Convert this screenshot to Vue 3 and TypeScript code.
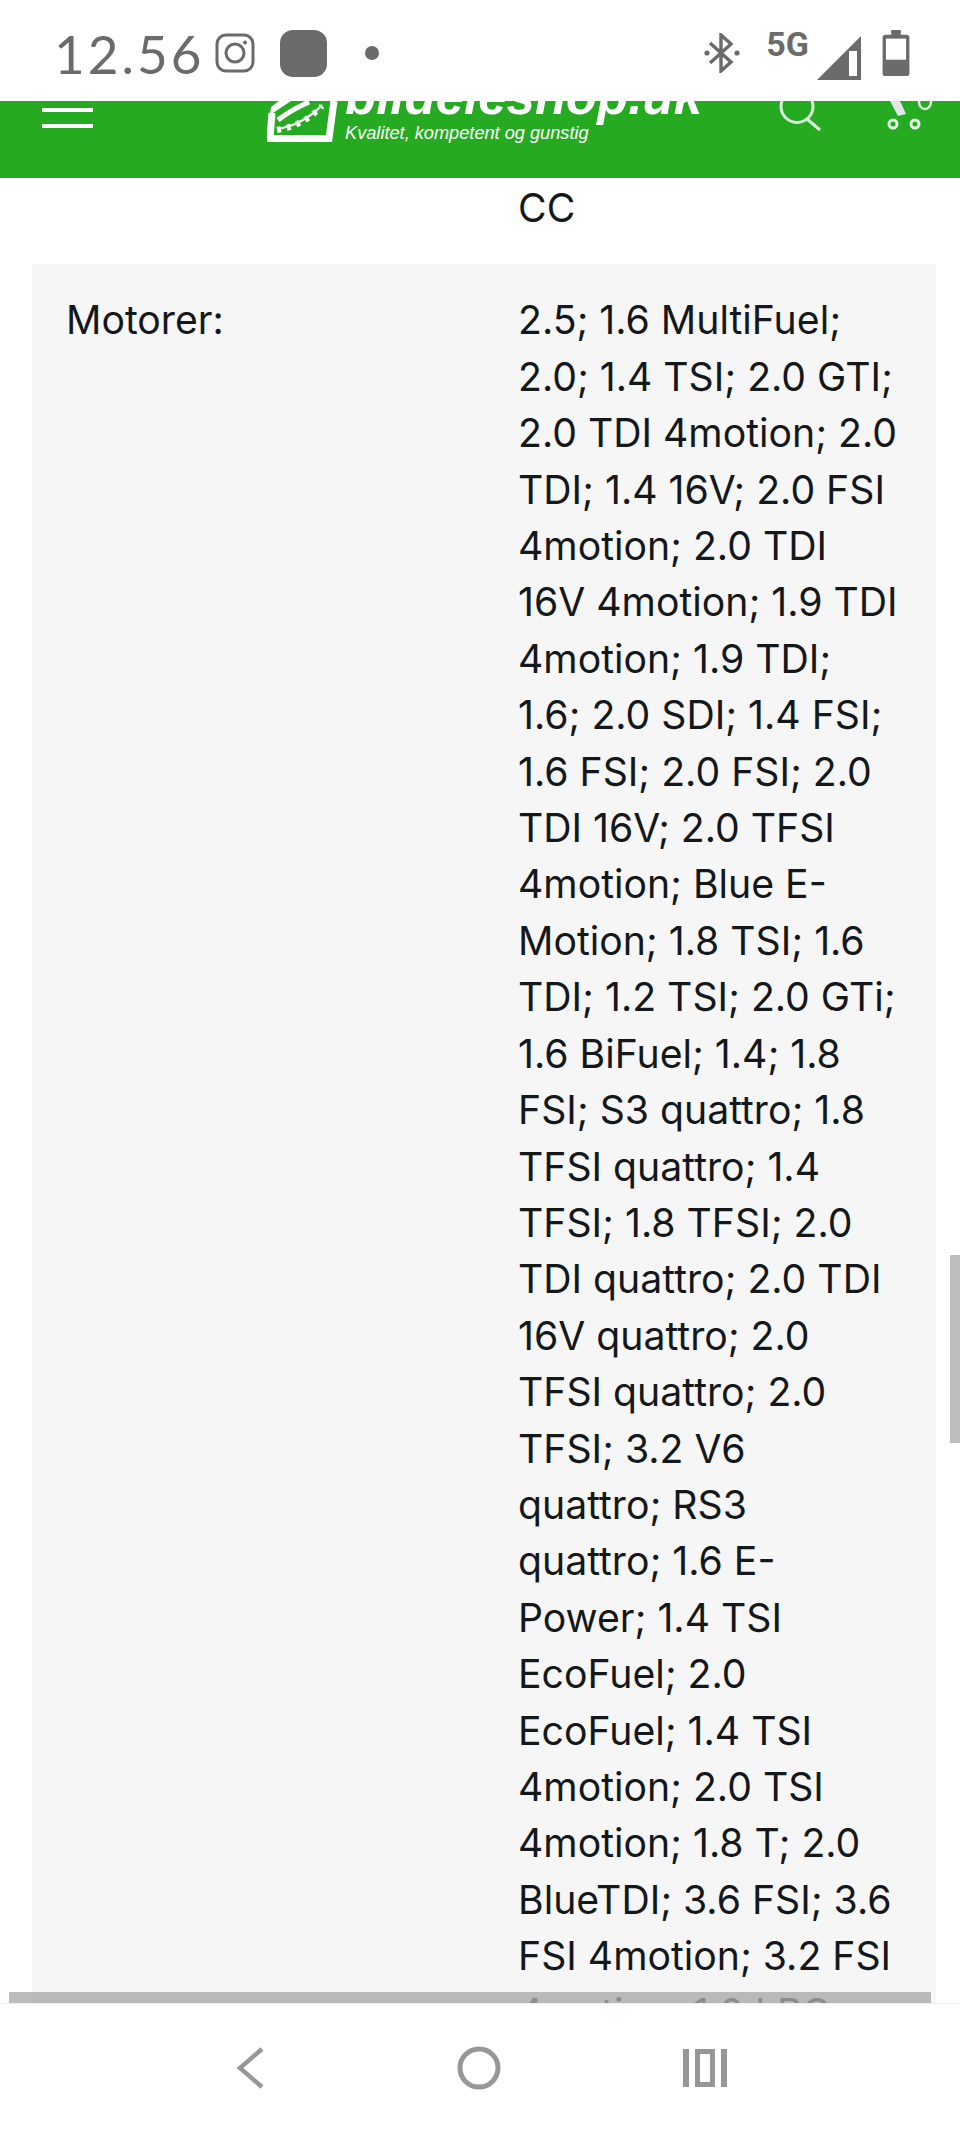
<template>
  <div class="phone">
    <div class="status">
      <span class="time">12.56</span>
      <svg class="ig" viewBox="0 0 40 40" fill="none" stroke="#6b6b6b" stroke-width="3">
        <rect x="2" y="2" width="36" height="36" rx="9" />
        <circle cx="20" cy="20" r="9" />
        <circle cx="30" cy="9.5" r="2" fill="#6b6b6b" stroke="none" />
      </svg>
      <span class="app-square"></span>
      <span class="dot"></span>
      <span class="spacer"></span>
      <svg class="bt" viewBox="0 0 36 40" fill="none" stroke="#6b6b6b" stroke-width="3.4">
        <path d="M6 10 L27 29 L17 38 V2 L27 11 L6 30" />
        <circle cx="3" cy="20" r="2.6" fill="#6b6b6b" stroke="none" />
        <circle cx="33" cy="20" r="2.6" fill="#6b6b6b" stroke="none" />
      </svg>
      <span class="net">5G</span>
      <svg class="signal" viewBox="0 0 44 44">
        <path d="M0 44 L44 0 V44 Z" fill="#6b6b6b" />
        <path d="M32 15 H40 V40 H32 Z" fill="#fff" />
      </svg>
      <svg class="battery" viewBox="0 0 28 48">
        <path d="M9 0 H19 V5 H25 Q28 5 28 8 V45 Q28 48 25 48 H3 Q0 48 0 45 V8 Q0 5 3 5 H9 Z" fill="#6b6b6b" />
        <rect x="3.5" y="9" width="21" height="22" fill="#fff" />
      </svg>
    </div>

    <header class="topbar">
      <div class="burger"><i></i><i></i></div>
      <div class="logo">
        <svg class="logo-mark" viewBox="0 0 75 41" fill="none" stroke="#fff">
          <path d="M5 12 L3 37.5 H62 L67 0" stroke-width="7" />
          <path d="M3 14 L24 0 H12 L4 6 Z" fill="#fff" stroke="none" />
          <path d="M11 19 Q24 9 42 1" stroke-width="5" />
          <path d="M10 28 Q36 24 55 4" stroke-width="2.5" />
          <path d="M10 29 Q36 25 55 5" stroke-width="6" stroke-dasharray="4 6" />
        </svg>
        <div class="logo-text">
          <span class="logo-name">bildeleshop.uk</span>
          <span class="logo-sub">Kvalitet, kompetent og gunstig</span>
        </div>
      </div>
      <svg class="search" viewBox="0 0 48 32" fill="none" stroke="#d9eed6" stroke-width="3">
        <circle cx="21" cy="5.5" r="16" />
        <path d="M31 18 L44 29" />
      </svg>
      <svg class="cart" viewBox="0 0 56 32" fill="none" stroke="#e4f2e2" stroke-width="3">
        <path d="M10 0 H20 L26 13 L18 15 Z" fill="#e3e6e6" stroke="none" />
        <ellipse cx="45" cy="1" rx="6" ry="7" stroke-width="2.5" />
        <circle cx="13" cy="23" r="4" />
        <circle cx="35" cy="23" r="4" />
      </svg>
    </header>

    <main class="content">
      <div class="row first">
        <div class="label"></div>
        <div class="value">CC</div>
      </div>
      <div class="row shaded">
        <div class="label">Motorer:</div>
        <div class="value">
          <div v-for="line in motorLines" :key="line">{{ line }}</div>
        </div>
      </div>
      <div class="scroll-v"></div>
      <div class="scroll-h"></div>
    </main>

    <nav class="navbar">
      <svg class="nav-back" viewBox="0 0 30 42" fill="none" stroke="#979797" stroke-width="4.4">
        <path d="M27 2 L5 21 L27 40" />
      </svg>
      <svg class="nav-home" viewBox="0 0 44 44" fill="none" stroke="#979797" stroke-width="5">
        <circle cx="22" cy="22" r="19" />
      </svg>
      <svg class="nav-recent" viewBox="0 0 44 38" fill="#979797">
        <rect x="0" y="0" width="6" height="38" />
        <rect x="38" y="0" width="6" height="38" />
        <path fill-rule="evenodd" d="M12 0 H32 V38 H12 Z M17 5 V33 H27 V5 Z" />
      </svg>
    </nav>
  </div>
</template>

<script setup lang="ts">
const motorLines: string[] = [
  '2.5; 1.6 MultiFuel;',
  '2.0; 1.4 TSI; 2.0 GTI;',
  '2.0 TDI 4motion; 2.0',
  'TDI; 1.4 16V; 2.0 FSI',
  '4motion; 2.0 TDI',
  '16V 4motion; 1.9 TDI',
  '4motion; 1.9 TDI;',
  '1.6; 2.0 SDI; 1.4 FSI;',
  '1.6 FSI; 2.0 FSI; 2.0',
  'TDI 16V; 2.0 TFSI',
  '4motion; Blue E-',
  'Motion; 1.8 TSI; 1.6',
  'TDI; 1.2 TSI; 2.0 GTi;',
  '1.6 BiFuel; 1.4; 1.8',
  'FSI; S3 quattro; 1.8',
  'TFSI quattro; 1.4',
  'TFSI; 1.8 TFSI; 2.0',
  'TDI quattro; 2.0 TDI',
  '16V quattro; 2.0',
  'TFSI quattro; 2.0',
  'TFSI; 3.2 V6',
  'quattro; RS3',
  'quattro; 1.6 E-',
  'Power; 1.4 TSI',
  'EcoFuel; 2.0',
  'EcoFuel; 1.4 TSI',
  '4motion; 2.0 TSI',
  '4motion; 1.8 T; 2.0',
  'BlueTDI; 3.6 FSI; 3.6',
  'FSI 4motion; 3.2 FSI',
  '4motion; 1.0 LPG'
];
</script>

<style scoped>
.phone {
  width: 960px;
  height: 2134px;
  display: flex;
  flex-direction: column;
  overflow: hidden;
  background: #fff;
  font-family: Inter, "Liberation Sans", sans-serif;
  color: #14181b;
}

.status {
  height: 101px;
  flex-shrink: 0;
  display: flex;
  align-items: center;
  padding: 5px 50px 0 54px;
  box-sizing: border-box;
}
.time {
  font-family: Lato, "Liberation Sans", sans-serif;
  font-size: 53px;
  letter-spacing: 3px;
  color: #6b6b6b;
  width: 161px;
}
.ig { width: 40px; height: 40px; }
.app-square {
  width: 47px;
  height: 47px;
  margin-left: 25px;
  border-radius: 13px;
  background: #6b6b6b;
}
.dot {
  width: 14px;
  height: 14px;
  margin-left: 38px;
  border-radius: 50%;
  background: #6b6b6b;
}
.spacer { flex: 1; }
.bt { width: 36px; height: 40px; }
.net {
  font-family: Roboto, "Liberation Sans", sans-serif;
  font-weight: 700;
  font-size: 34px;
  color: #6b6b6b;
  margin: 0 0 18px 26px;
}
.signal { width: 44px; height: 44px; margin: 10px 0 0 8px; }
.battery { width: 28px; height: 46px; margin: 0 0 0 21px; }

.topbar {
  height: 77px;
  flex-shrink: 0;
  background: #25aa22;
  display: flex;
  align-items: flex-start;
  overflow: hidden;
}
.burger {
  width: 51px;
  margin: 7px 0 0 42px;
  display: flex;
  flex-direction: column;
  gap: 12px;
}
.burger i {
  display: block;
  height: 4px;
  background: #fff;
}
.logo {
  display: flex;
  margin-left: 174px;
  width: 509px;
  flex-shrink: 0;
}
.logo-mark { width: 75px; height: 41px; flex-shrink: 0; }
.logo-text { display: flex; flex-direction: column; margin-left: 3px; }
.logo-name {
  margin-top: -30px;
  font-family: "Liberation Sans", sans-serif;
  font-weight: 700;
  font-style: italic;
  font-size: 51px;
  line-height: 52px;
  color: #fff;
  white-space: nowrap;
}
.logo-sub {
  font-family: "Liberation Sans", sans-serif;
  font-style: italic;
  font-size: 18.2px;
  line-height: 20px;
  color: #fff;
  white-space: nowrap;
}
.search { width: 48px; height: 32px; flex-shrink: 0; }
.cart { width: 56px; height: 32px; flex-shrink: 0; margin-left: 56px; }

.content {
  flex: 1;
  min-height: 0;
  position: relative;
  overflow: hidden;
  font-size: 39.2px;
  line-height: 56.4px;
}
.row {
  display: grid;
  grid-template-columns: 452px 1fr;
  margin: 0 24px 0 32px;
  padding: 0 34px;
}
.first { padding-top: 2px; padding-bottom: 28px; }
.shaded { background: #f6f6f7; padding-top: 28px; padding-bottom: 28px; }
.value { white-space: nowrap; }

.scroll-v {
  position: absolute;
  right: 0;
  top: 1077px;
  width: 10px;
  height: 188px;
  background: #bdbdbd;
}
.scroll-h {
  position: absolute;
  left: 9px;
  bottom: 0;
  width: 922px;
  height: 11px;
  background: rgba(170, 170, 170, 0.8);
}

.navbar {
  height: 131px;
  flex-shrink: 0;
  box-sizing: border-box;
  border-top: 1px solid #f0f0f0;
  background: #fff;
  display: flex;
  align-items: center;
  justify-content: center;
  padding: 0 0 3px 2px;
}
.nav-back { width: 30px; height: 42px; margin-right: 192px; }
.nav-home { width: 44px; height: 44px; margin-right: 182px; }
.nav-recent { width: 44px; height: 38px; }
</style>

<style>
html, body { margin: 0; background: #fff; }
</style>
